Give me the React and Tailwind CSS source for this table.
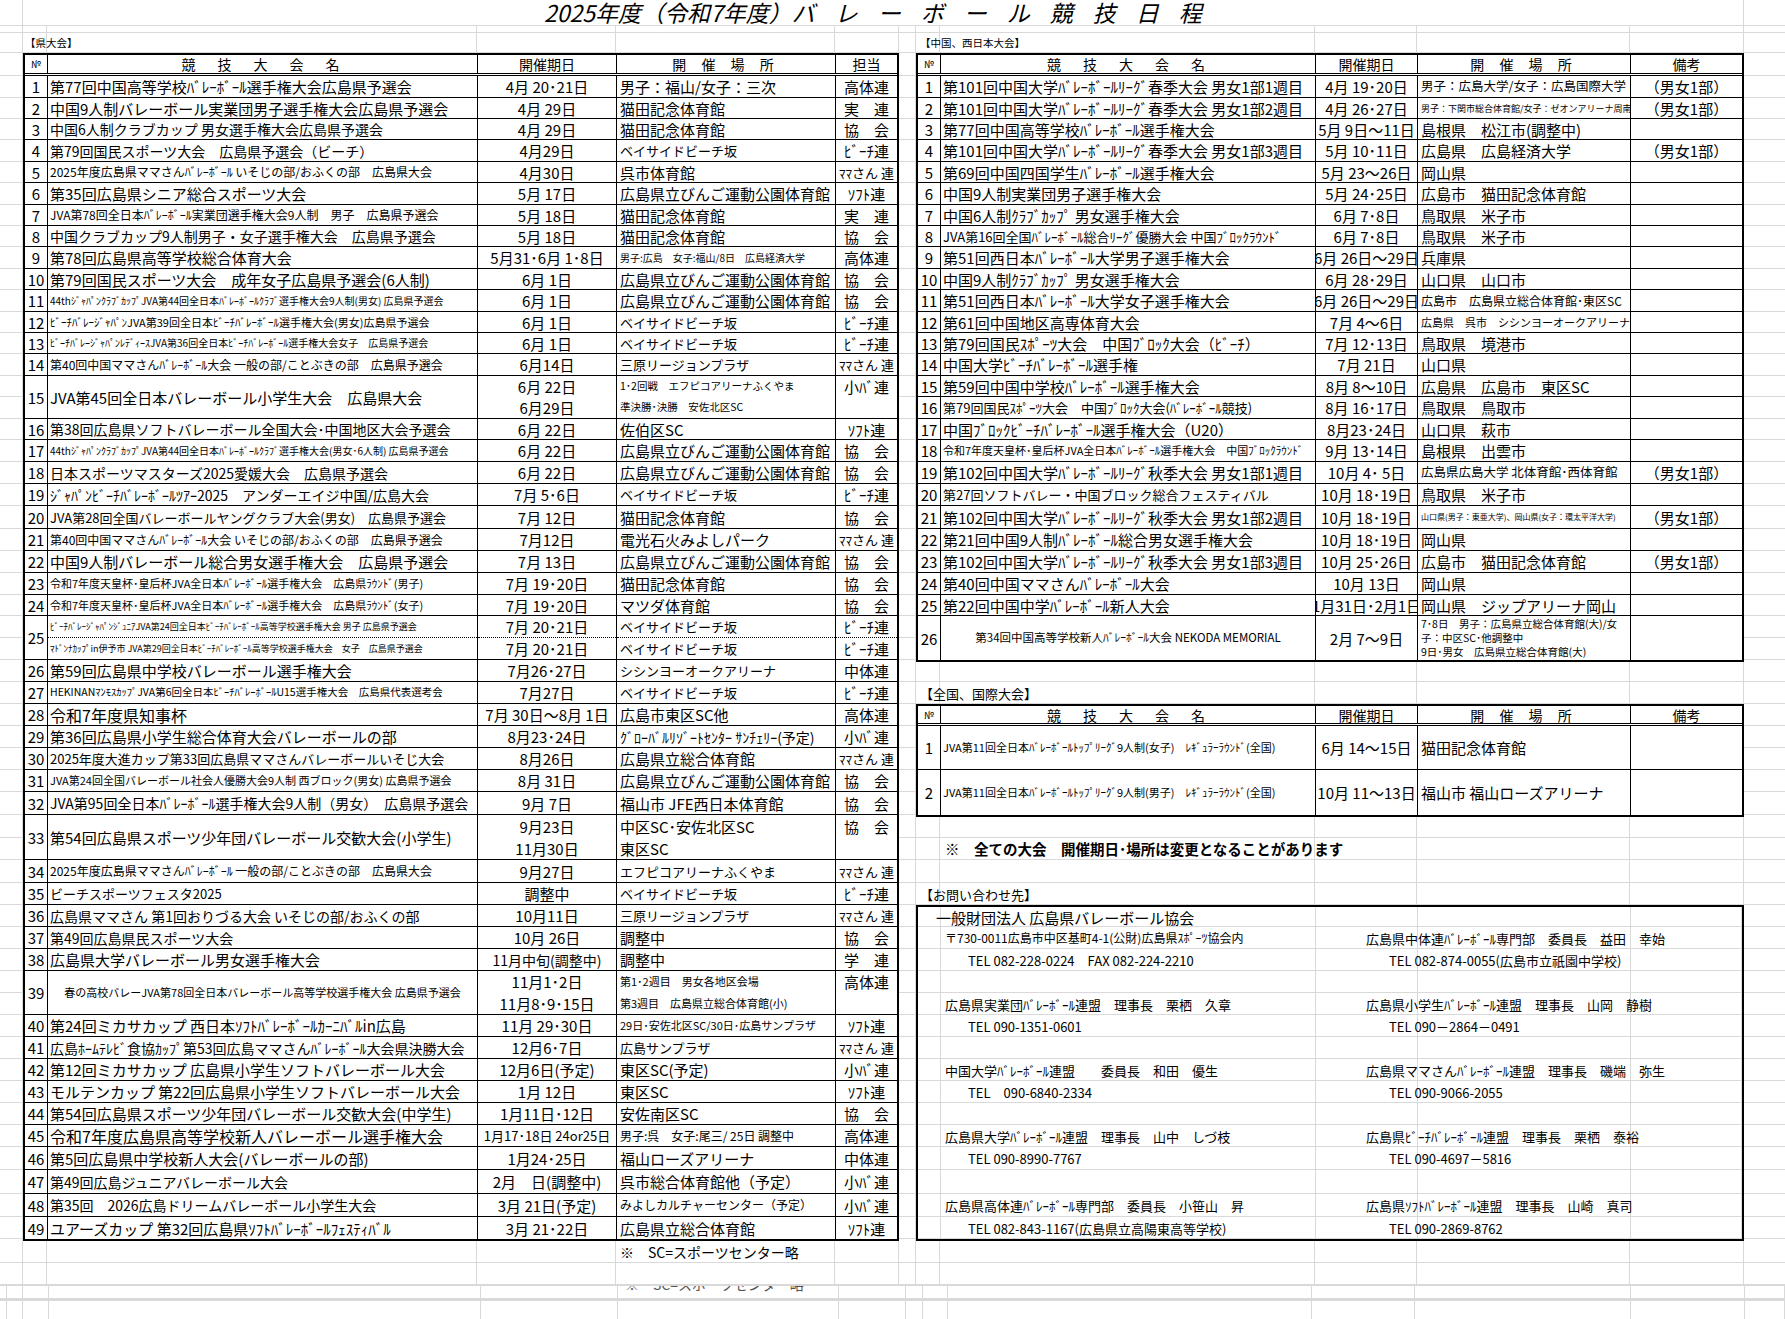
import React from "react";

// row heights (px) -> literal classes
const HC = {
  7: "h-[7px]", 13: "h-[13px]", 19: "h-[19px]", 20: "h-[20px]", 21: "h-[21px]", 22: "h-[22px]",
  23: "h-[23px]", 24: "h-[24px]", 42: "h-[42px]", 43: "h-[43px]", 44: "h-[44px]", 45: "h-[45px]",
  46: "h-[46px]", 47: "h-[47px]",
};

// sheet sub-rows under the table headers
const SUBH = [
  22, 21, 21, 22, 21, 22, 21, 21, 22, 21, 22, 21, 21, 22, 21, 22, 21, 22, 22, 22, 23, 22, 22, 22, 21,
  22, 22, 22, 22, 22, 22, 22, 22, 23, 23, 22, 23, 22, 22, 22, 22, 22, 22, 22, 22, 22, 22, 22, 22, 23, 24, 23, 22,
];

const LW = ["w-[24px]", "w-[430px]", "w-[139px]", "w-[219px]", "w-[64px]"];
const LWI = ["w-[23px]", "w-[430px]", "w-[139px]", "w-[219px]", "w-[61px]"];
const RW = ["w-[24px]", "w-[375px]", "w-[102px]", "w-[213px]", "w-[114px]"];
const RWI = ["w-[23px]", "w-[375px]", "w-[102px]", "w-[213px]", "w-[111px]"];
const P2 = [
  "w-[7px]", "w-[16px]", "w-[26px]", "w-[432px]", "w-[137px]", "w-[221px]", "w-[67px]",
  "w-[17px]", "w-[25px]", "w-[364px]", "w-[103px]", "w-[216px]", "w-[114px]", "w-[40px]",
];

const BEACH = "ベイサイドビーチ坂";
const BINGO = "広島県立びんご運動公園体育館";

const LEFT = [
  { n: 1, name: "第77回中国高等学校ﾊﾞﾚｰﾎﾞｰﾙ選手権大会広島県予選会", d: "4月 20･21日", p: "男子：福山/女子：三次", t: "高体連" },
  { n: 2, name: "中国9人制バレーボール実業団男子選手権大会広島県予選会", d: "4月 29日", p: "猫田記念体育館", t: "実　連" },
  { n: 3, name: "中国6人制クラブカップ 男女選手権大会広島県予選会", nc: "text-[14px]", d: "4月 29日", p: "猫田記念体育館", t: "協　会" },
  { n: 4, name: "第79回国民スポーツ大会　広島県予選会（ビーチ）", nc: "text-[14px]", d: "4月29日", p: BEACH, pc: "text-[13px]", t: "ﾋﾞｰﾁ連" },
  { n: 5, name: "2025年度広島県ママさんﾊﾞﾚｰﾎﾞｰﾙ いそじの部/おふくの部　広島県大会", nc: "text-[12px]", d: "4月30日", p: "呉市体育館", t: "ﾏﾏさん 連", tc: "text-[13px]" },
  { n: 6, name: "第35回広島県シニア総合スポーツ大会", d: "5月 17日", p: BINGO, t: "ｿﾌﾄ連" },
  { n: 7, name: "JVA第78回全日本ﾊﾞﾚｰﾎﾞｰﾙ実業団選手権大会9人制　男子　広島県予選会", nc: "text-[12px]", d: "5月 18日", p: "猫田記念体育館", t: "実　連" },
  { n: 8, name: "中国クラブカップ9人制男子・女子選手権大会　広島県予選会", nc: "text-[14px]", d: "5月 18日", p: "猫田記念体育館", t: "協　会" },
  { n: 9, name: "第78回広島県高等学校総合体育大会", d: "5月31･6月 1･8日", p: "男子:広島　女子:福山/8日　広島経済大学", pc: "text-[10px]", t: "高体連" },
  { n: 10, name: "第79回国民スポーツ大会　成年女子広島県予選会(6人制)", d: "6月 1日", p: BINGO, t: "協　会" },
  { n: 11, name: "44thｼﾞｬﾊﾟﾝｸﾗﾌﾞｶｯﾌﾟJVA第44回全日本ﾊﾞﾚｰﾎﾞｰﾙｸﾗﾌﾞ選手権大会9人制(男女) 広島県予選会", nc: "text-[10px]", d: "6月 1日", p: BINGO, t: "協　会" },
  { n: 12, name: "ﾋﾞｰﾁﾊﾞﾚｰｼﾞｬﾊﾟﾝJVA第39回全日本ﾋﾞｰﾁﾊﾞﾚｰﾎﾞｰﾙ選手権大会(男女)広島県予選会", nc: "text-[11px]", d: "6月 1日", p: BEACH, pc: "text-[13px]", t: "ﾋﾞｰﾁ連" },
  { n: 13, name: "ﾋﾞｰﾁﾊﾞﾚｰｼﾞｬﾊﾟﾝﾚﾃﾞｨｰｽJVA第36回全日本ﾋﾞｰﾁﾊﾞﾚｰﾎﾞｰﾙ選手権大会女子　広島県予選会", nc: "text-[10px]", d: "6月 1日", p: BEACH, pc: "text-[13px]", t: "ﾋﾞｰﾁ連" },
  { n: 14, name: "第40回中国ママさんﾊﾞﾚｰﾎﾞｰﾙ大会 一般の部/ことぶきの部　広島県予選会", nc: "text-[12px]", d: "6月14日", p: "三原リージョンプラザ", pc: "text-[13px]", t: "ﾏﾏさん 連", tc: "text-[13px]" },
  { n: 15, k: 2, name: "JVA第45回全日本バレーボール小学生大会　広島県大会", d: ["6月 22日", "6月29日"], p: ["1･2回戦　エフピコアリーナふくやま", "準決勝･決勝　安佐北区SC"], pc: "text-[10.5px]", t: ["小ﾊﾞ連", ""] },
  { n: 16, name: "第38回広島県ソフトバレーボール全国大会･中国地区大会予選会", nc: "text-[14px]", d: "6月 22日", p: "佐伯区SC", t: "ｿﾌﾄ連" },
  { n: 17, name: "44thｼﾞｬﾊﾟﾝｸﾗﾌﾞｶｯﾌﾟJVA第44回全日本ﾊﾞﾚｰﾎﾞｰﾙｸﾗﾌﾞ選手権大会(男女･6人制) 広島県予選会", nc: "text-[10px]", d: "6月 22日", p: BINGO, t: "協　会" },
  { n: 18, name: "日本スポーツマスターズ2025愛媛大会　広島県予選会", nc: "text-[14px]", d: "6月 22日", p: BINGO, t: "協　会" },
  { n: 19, name: "ｼﾞｬﾊﾟﾝﾋﾞｰﾁﾊﾞﾚｰﾎﾞｰﾙﾂｱｰ2025　アンダーエイジ中国/広島大会", nc: "text-[14px]", d: "7月 5･6日", p: BEACH, pc: "text-[13px]", t: "ﾋﾞｰﾁ連" },
  { n: 20, name: "JVA第28回全国バレーボールヤングクラブ大会(男女)　広島県予選会", nc: "text-[13px]", d: "7月 12日", p: "猫田記念体育館", t: "協　会" },
  { n: 21, name: "第40回中国ママさんﾊﾞﾚｰﾎﾞｰﾙ大会 いそじの部/おふくの部　広島県予選会", nc: "text-[12px]", d: "7月12日", p: "電光石火みよしパーク", t: "ﾏﾏさん 連", tc: "text-[13px]" },
  { n: 22, name: "中国9人制バレーボール総合男女選手権大会　広島県予選会", d: "7月 13日", p: BINGO, t: "協　会" },
  { n: 23, name: "令和7年度天皇杯･皇后杯JVA全日本ﾊﾞﾚｰﾎﾞｰﾙ選手権大会　広島県ﾗｳﾝﾄﾞ(男子)", nc: "text-[11px]", d: "7月 19･20日", p: "猫田記念体育館", t: "協　会" },
  { n: 24, name: "令和7年度天皇杯･皇后杯JVA全日本ﾊﾞﾚｰﾎﾞｰﾙ選手権大会　広島県ﾗｳﾝﾄﾞ(女子)", nc: "text-[11px]", d: "7月 19･20日", p: "マツダ体育館", t: "協　会" },
  {
    n: 25, k: 2, dotted: true, nc: "text-[9px]",
    name: ["ﾋﾞｰﾁﾊﾞﾚｰｼﾞｬﾊﾟﾝｼﾞｭﾆｱJVA第24回全日本ﾋﾞｰﾁﾊﾞﾚｰﾎﾞｰﾙ高等学校選手権大会 男子 広島県予選会", "ﾏﾄﾞﾝﾅｶｯﾌﾟin伊予市 JVA第29回全日本ﾋﾞｰﾁﾊﾞﾚｰﾎﾞｰﾙ高等学校選手権大会　女子　広島県予選会"],
    d: ["7月 20･21日", "7月 20･21日"], p: [BEACH, BEACH], pc: "text-[13px]", t: ["ﾋﾞｰﾁ連", "ﾋﾞｰﾁ連"],
  },
  { n: 26, name: "第59回広島県中学校バレーボール選手権大会", d: "7月26･27日", p: "シシンヨーオークアリーナ", pc: "text-[13px]", t: "中体連" },
  { n: 27, name: "HEKINANﾏﾝﾓｽｶｯﾌﾟJVA第6回全日本ﾋﾞｰﾁﾊﾞﾚｰﾎﾞｰﾙU15選手権大会　広島県代表選考会", nc: "text-[10.5px]", d: "7月27日", p: BEACH, pc: "text-[13px]", t: "ﾋﾞｰﾁ連" },
  { n: 28, name: "令和7年度県知事杯", nc: "text-[16px]", d: "7月 30日～8月 1日", p: "広島市東区SC他", t: "高体連" },
  { n: 29, name: "第36回広島県小学生総合体育大会バレーボールの部", d: "8月23･24日", p: "ｸﾞﾛｰﾊﾞﾙﾘｿﾞｰﾄｾﾝﾀｰ ｻﾝﾁｪﾘｰ(予定)", pc: "text-[14px]", t: "小ﾊﾞ連" },
  { n: 30, name: "2025年度大進カップ第33回広島県ママさんバレーボールいそじ大会", nc: "text-[13px]", d: "8月26日", p: "広島県立総合体育館", t: "ﾏﾏさん 連", tc: "text-[13px]" },
  { n: 31, name: "JVA第24回全国バレーボール社会人優勝大会9人制 西ブロック(男女) 広島県予選会", nc: "text-[11px]", d: "8月 31日", p: BINGO, t: "協　会" },
  { n: 32, name: "JVA第95回全日本ﾊﾞﾚｰﾎﾞｰﾙ選手権大会9人制（男女）　広島県予選会", nc: "text-[14px]", d: "9月 7日", p: "福山市 JFE西日本体育館", t: "協　会" },
  { n: 33, k: 2, name: "第54回広島県スポーツ少年団バレーボール交歓大会(小学生)", d: ["9月23日", "11月30日"], p: ["中区SC･安佐北区SC", "東区SC"], t: ["協　会", ""] },
  { n: 34, name: "2025年度広島県ママさんﾊﾞﾚｰﾎﾞｰﾙ 一般の部/ことぶきの部　広島県大会", nc: "text-[12px]", d: "9月27日", p: "エフピコアリーナふくやま", pc: "text-[13px]", t: "ﾏﾏさん 連", tc: "text-[13px]" },
  { n: 35, name: "ビーチスポーツフェスタ2025", nc: "text-[13px]", d: "調整中", p: BEACH, pc: "text-[13px]", t: "ﾋﾞｰﾁ連" },
  { n: 36, name: "広島県ママさん 第1回おりづる大会 いそじの部/おふくの部", nc: "text-[14px]", d: "10月11日", p: "三原リージョンプラザ", pc: "text-[13px]", t: "ﾏﾏさん 連", tc: "text-[13px]" },
  { n: 37, name: "第49回広島県民スポーツ大会", nc: "text-[14px]", d: "10月 26日", p: "調整中", t: "協　会" },
  { n: 38, name: "広島県大学バレーボール男女選手権大会", d: "11月中旬(調整中)", dc: "text-[14px]", p: "調整中", t: "学　連" },
  {
    n: 39, k: 2, name: "春の高校バレーJVA第78回全日本バレーボール高等学校選手権大会 広島県予選会", nc: "text-[11px]", center: true,
    d: ["11月1･2日", "11月8･9･15日"], p: ["第1･2週目　男女各地区会場", "第3週目　広島県立総合体育館(小)"], pc: "text-[11px]", t: ["高体連", ""],
  },
  { n: 40, name: "第24回ミカサカップ 西日本ｿﾌﾄﾊﾞﾚｰﾎﾞｰﾙｶｰﾆﾊﾞﾙin広島", d: "11月 29･30日", p: "29日･安佐北区SC/30日･広島サンプラザ", pc: "text-[11px]", t: "ｿﾌﾄ連" },
  { n: 41, name: "広島ﾎｰﾑﾃﾚﾋﾞ食協ｶｯﾌﾟ第53回広島ママさんﾊﾞﾚｰﾎﾞｰﾙ大会県決勝大会", nc: "text-[14px]", d: "12月6･7日", p: "広島サンプラザ", pc: "text-[13px]", t: "ﾏﾏさん 連", tc: "text-[13px]" },
  { n: 42, name: "第12回ミカサカップ 広島県小学生ソフトバレーボール大会", d: "12月6日(予定)", p: "東区SC(予定)", t: "小ﾊﾞ連" },
  { n: 43, name: "モルテンカップ 第22回広島県小学生ソフトバレーボール大会", d: "1月 12日", p: "東区SC", t: "ｿﾌﾄ連" },
  { n: 44, name: "第54回広島県スポーツ少年団バレーボール交歓大会(中学生)", d: "1月11日･12日", p: "安佐南区SC", t: "協　会" },
  { n: 45, name: "令和7年度広島県高等学校新人バレーボール選手権大会", nc: "text-[16px]", d: "1月17･18日 24or25日", dc: "text-[13px]", p: "男子:呉　女子:尾三/ 25日 調整中", pc: "text-[12px]", t: "高体連" },
  { n: 46, name: "第5回広島県中学校新人大会(バレーボールの部)", d: "1月24･25日", p: "福山ローズアリーナ", t: "中体連" },
  { n: 47, name: "第49回広島ジュニアバレーボール大会", nc: "text-[14px]", d: "2月　日(調整中)", p: "呉市総合体育館他（予定）", t: "小ﾊﾞ連" },
  { n: 48, name: "第35回　2026広島ドリームバレーボール小学生大会", nc: "text-[14px]", d: "3月 21日(予定)", p: "みよしカルチャーセンター（予定）", pc: "text-[12px]", t: "小ﾊﾞ連" },
  { n: 49, name: "ユアーズカップ 第32回広島県ｿﾌﾄﾊﾞﾚｰﾎﾞｰﾙﾌｪｽﾃｨﾊﾞﾙ", d: "3月 21･22日", p: "広島県立総合体育館", t: "ｿﾌﾄ連" },
];

const M1 = "（男女1部）";
const RIGHT = [
  { n: 1, name: "第101回中国大学ﾊﾞﾚｰﾎﾞｰﾙﾘｰｸﾞ春季大会 男女1部1週目", d: "4月 19･20日", p: "男子：広島大学/女子：広島国際大学", pc: "text-[12.5px]", t: M1 },
  { n: 2, name: "第101回中国大学ﾊﾞﾚｰﾎﾞｰﾙﾘｰｸﾞ春季大会 男女1部2週目", d: "4月 26･27日", p: "男子：下関市総合体育館/女子：ゼオンアリーナ周南", pc: "text-[9px]", t: M1 },
  { n: 3, name: "第77回中国高等学校ﾊﾞﾚｰﾎﾞｰﾙ選手権大会", d: "5月 9日～11日", p: "島根県　松江市(調整中)", t: "" },
  { n: 4, name: "第101回中国大学ﾊﾞﾚｰﾎﾞｰﾙﾘｰｸﾞ春季大会 男女1部3週目", d: "5月 10･11日", p: "広島県　広島経済大学", t: M1 },
  { n: 5, name: "第69回中国四国学生ﾊﾞﾚｰﾎﾞｰﾙ選手権大会", d: "5月 23～26日", p: "岡山県", t: "" },
  { n: 6, name: "中国9人制実業団男子選手権大会", d: "5月 24･25日", p: "広島市　猫田記念体育館", t: "" },
  { n: 7, name: "中国6人制ｸﾗﾌﾞｶｯﾌﾟ 男女選手権大会", d: "6月 7･8日", p: "鳥取県　米子市", t: "" },
  { n: 8, name: "JVA第16回全国ﾊﾞﾚｰﾎﾞｰﾙ総合ﾘｰｸﾞ優勝大会 中国ﾌﾞﾛｯｸﾗｳﾝﾄﾞ", nc: "text-[13px]", d: "6月 7･8日", p: "鳥取県　米子市", t: "" },
  { n: 9, name: "第51回西日本ﾊﾞﾚｰﾎﾞｰﾙ大学男子選手権大会", d: "6月 26日～29日", p: "兵庫県", t: "" },
  { n: 10, name: "中国9人制ｸﾗﾌﾞｶｯﾌﾟ 男女選手権大会", d: "6月 28･29日", p: "山口県　山口市", t: "" },
  { n: 11, name: "第51回西日本ﾊﾞﾚｰﾎﾞｰﾙ大学女子選手権大会", d: "6月 26日～29日", p: "広島市　広島県立総合体育館･東区SC", pc: "text-[12px]", t: "" },
  { n: 12, name: "第61回中国地区高専体育大会", d: "7月 4～6日", p: "広島県　呉市　シシンヨーオークアリーナ", pc: "text-[11px]", t: "" },
  { n: 13, name: "第79回国民ｽﾎﾟｰﾂ大会　中国ﾌﾞﾛｯｸ大会（ﾋﾞｰﾁ）", d: "7月 12･13日", p: "鳥取県　境港市", t: "" },
  { n: 14, name: "中国大学ﾋﾞｰﾁﾊﾞﾚｰﾎﾞｰﾙ選手権", d: "7月 21日", p: "山口県", t: "" },
  { n: 15, name: "第59回中国中学校ﾊﾞﾚｰﾎﾞｰﾙ選手権大会", d: "8月 8～10日", p: "広島県　広島市　東区SC", t: "" },
  { n: 16, name: "第79回国民ｽﾎﾟｰﾂ大会　中国ﾌﾞﾛｯｸ大会(ﾊﾞﾚｰﾎﾞｰﾙ競技)", nc: "text-[13px]", d: "8月 16･17日", p: "鳥取県　鳥取市", t: "" },
  { n: 17, name: "中国ﾌﾞﾛｯｸﾋﾞｰﾁﾊﾞﾚｰﾎﾞｰﾙ選手権大会（U20）", d: "8月23･24日", p: "山口県　萩市", t: "" },
  { n: 18, name: "令和7年度天皇杯･皇后杯JVA全日本ﾊﾞﾚｰﾎﾞｰﾙ選手権大会　中国ﾌﾞﾛｯｸﾗｳﾝﾄﾞ", nc: "text-[11px]", d: "9月 13･14日", p: "島根県　出雲市", t: "" },
  { n: 19, name: "第102回中国大学ﾊﾞﾚｰﾎﾞｰﾙﾘｰｸﾞ秋季大会 男女1部1週目", d: "10月 4･ 5日", p: "広島県広島大学 北体育館･西体育館", pc: "text-[12.5px]", t: M1 },
  { n: 20, name: "第27回ソフトバレー・中国ブロック総合フェスティバル", nc: "text-[13px]", d: "10月 18･19日", p: "鳥取県　米子市", t: "" },
  { n: 21, name: "第102回中国大学ﾊﾞﾚｰﾎﾞｰﾙﾘｰｸﾞ秋季大会 男女1部2週目", d: "10月 18･19日", p: "山口県(男子：東亜大学)、岡山県(女子：環太平洋大学)", pc: "text-[8px]", t: M1 },
  { n: 22, name: "第21回中国9人制ﾊﾞﾚｰﾎﾞｰﾙ総合男女選手権大会", d: "10月 18･19日", p: "岡山県", t: "" },
  { n: 23, name: "第102回中国大学ﾊﾞﾚｰﾎﾞｰﾙﾘｰｸﾞ秋季大会 男女1部3週目", d: "10月 25･26日", p: "広島市　猫田記念体育館", t: M1 },
  { n: 24, name: "第40回中国ママさんﾊﾞﾚｰﾎﾞｰﾙ大会", d: "10月 13日", p: "岡山県", t: "" },
  { n: 25, name: "第22回中国中学ﾊﾞﾚｰﾎﾞｰﾙ新人大会", d: "1月31日･2月1日", p: "岡山県　ジップアリーナ岡山", t: "" },
  {
    n: 26, k: 2, name: "第34回中国高等学校新人ﾊﾞﾚｰﾎﾞｰﾙ大会 NEKODA MEMORIAL", nc: "text-[11.5px]", center: true, d: "2月 7～9日",
    p: (
      <div className="flex flex-col leading-[14px]">
        <span>7･8日　男子：広島県立総合体育館(大)/女</span>
        <span>子：中区SC･他調整中</span>
        <span>9日･男女　広島県立総合体育館(大)</span>
      </div>
    ),
    pc: "text-[10.5px]", t: "",
  },
];

const ZENKOKU = [
  { n: 1, k: 2, name: "JVA第11回全日本ﾊﾞﾚｰﾎﾞｰﾙﾄｯﾌﾟﾘｰｸﾞ9人制(女子)　ﾚｷﾞｭﾗｰﾗｳﾝﾄﾞ(全国)", nc: "text-[11px]", d: "6月 14～15日", p: "猫田記念体育館", t: "" },
  { n: 2, k: 2, name: "JVA第11回全日本ﾊﾞﾚｰﾎﾞｰﾙﾄｯﾌﾟﾘｰｸﾞ9人制(男子)　ﾚｷﾞｭﾗｰﾗｳﾝﾄﾞ(全国)", nc: "text-[11px]", d: "10月 11～13日", p: "福山市 福山ローズアリーナ", t: "" },
];

const CONTACT = [
  { l: "一般財団法人 広島県バレーボール協会", lp: "pl-[18px] text-[15px]" },
  { l: "〒730-0011広島市中区基町4-1(公財)広島県ｽﾎﾟｰﾂ協会内", lp: "pl-[27px] text-[12px]", r: "広島県中体連ﾊﾞﾚｰﾎﾞｰﾙ専門部　委員長　益田　幸始" },
  { l: "TEL 082-228-0224　FAX 082-224-2210", lp: "pl-[50px] text-[13px]", r: "TEL 082-874-0055(広島市立祇園中学校)", tel: true },
  {},
  { l: "広島県実業団ﾊﾞﾚｰﾎﾞｰﾙ連盟　理事長　栗栖　久章", lp: "pl-[27px] text-[13px]", r: "広島県小学生ﾊﾞﾚｰﾎﾞｰﾙ連盟　理事長　山岡　静樹" },
  { l: "TEL 090-1351-0601", lp: "pl-[50px] text-[13px]", r: "TEL 090－2864－0491", tel: true },
  {},
  { l: "中国大学ﾊﾞﾚｰﾎﾞｰﾙ連盟　　委員長　和田　優生", lp: "pl-[27px] text-[13px]", r: "広島県ママさんﾊﾞﾚｰﾎﾞｰﾙ連盟　理事長　磯端　弥生" },
  { l: "TEL　090-6840-2334", lp: "pl-[50px] text-[13px]", r: "TEL 090-9066-2055", tel: true },
  {},
  { l: "広島県大学ﾊﾞﾚｰﾎﾞｰﾙ連盟　理事長　山中　しづ枝", lp: "pl-[27px] text-[13px]", r: "広島県ﾋﾞｰﾁﾊﾞﾚｰﾎﾞｰﾙ連盟　理事長　栗栖　泰裕" },
  { l: "TEL 090-8990-7767", lp: "pl-[50px] text-[13px]", r: "TEL 090-4697－5816", tel: true },
  {},
  { l: "広島県高体連ﾊﾞﾚｰﾎﾞｰﾙ専門部　委員長　小笹山　昇", lp: "pl-[27px] text-[13px]", r: "広島県ｿﾌﾄﾊﾞﾚｰﾎﾞｰﾙ連盟　理事長　山崎　真司" },
  { l: "TEL 082-843-1167(広島県立高陽東高等学校)", lp: "pl-[50px] text-[13px]", r: "TEL 090-2869-8762", tel: true },
];

// spreadsheet gridlines behind, content stacked on top in the same grid cell
function GridBg({ h, widths, className = "", children }) {
  return (
    <div className={`grid grid-cols-1 shrink-0 ${h}`}>
      <div className="col-start-1 row-start-1 flex">
        {widths.map((w, i) => (
          <div key={i} className={`${w} shrink-0 border-r border-b border-[#d9d9d9]`} />
        ))}
      </div>
      <div className={`col-start-1 row-start-1 flex items-center whitespace-nowrap leading-none ${className}`}>
        {children}
      </div>
    </div>
  );
}

function Cell({ w, vals, cls, align, dotted, last }) {
  const arr = Array.isArray(vals) ? vals : [vals];
  return (
    <div className={`${w} shrink-0 flex flex-col ${last ? "" : "border-r border-black"}`}>
      {arr.map((v, i) => (
        <div
          key={i}
          className={`flex-1 min-h-0 flex items-center overflow-hidden whitespace-nowrap leading-none ${align} ${cls} ${
            dotted && i < arr.length - 1 ? "border-b border-dotted border-black" : ""
          }`}
        >
          {v}
        </div>
      ))}
    </div>
  );
}

function Header({ widths, head, h }) {
  return (
    <div className={`flex ${h} border-b-[3px] border-double border-black text-[14px] leading-none`}>
      <div className={`${widths[0]} shrink-0 border-r border-black flex items-center justify-center text-[10px]`}>№</div>
      <div className={`${widths[1]} shrink-0 border-r border-black flex items-center justify-center tracking-[4px]`}>
        競　技　大　会　名
      </div>
      <div className={`${widths[2]} shrink-0 border-r border-black flex items-center justify-center`}>開催期日</div>
      <div className={`${widths[3]} shrink-0 border-r border-black flex items-center justify-center tracking-[6px]`}>
        開 催 場 所
      </div>
      <div className={`${widths[4]} shrink-0 flex items-center justify-center`}>{head}</div>
    </div>
  );
}

function Table({ widths, head, rows, start, headH }) {
  let k = start;
  return (
    <div className="border-2 border-black shrink-0">
      <Header widths={widths} head={head} h={headH} />
      {rows.map((r, i) => {
        const n = r.k || 1;
        const h = SUBH.slice(k, k + n).reduce((a, b) => a + b, 0);
        k += n;
        const last = i === rows.length - 1;
        return (
          <div key={i} className={`flex ${HC[h]} ${last ? "" : "border-b border-black"}`}>
            <Cell w={widths[0]} vals={r.n} cls="text-[15px]" align="justify-center" />
            <Cell
              w={widths[1]}
              vals={r.name}
              cls={r.nc || "text-[15px]"}
              align={r.center ? "justify-center" : "pl-[2px]"}
              dotted={r.dotted}
            />
            <Cell w={widths[2]} vals={r.d} cls={r.dc || "text-[15px]"} align="justify-center" dotted={r.dotted} />
            <Cell w={widths[3]} vals={r.p} cls={r.pc || "text-[15px]"} align="pl-[3px]" dotted={r.dotted} />
            <Cell w={widths[4]} vals={r.t} cls={r.tc || "text-[15px]"} align="justify-center" dotted={r.dotted} last />
          </div>
        );
      })}
    </div>
  );
}

function MarginCol({ w, hs, right = true }) {
  return (
    <div className={`${w} shrink-0 flex flex-col`}>
      {hs.map((h, i) => (
        <div key={i} className={`${HC[h]} shrink-0 border-b ${right ? "border-r" : ""} border-[#d9d9d9]`} />
      ))}
    </div>
  );
}

export default function App() {
  const marginHs = [7, 20, 23, ...SUBH, 24, 22];

  return (
    <div className="w-[1785px] h-[1319px] overflow-hidden bg-white text-black font-['Noto_Sans_CJK_JP','Noto_Sans_CJK_SC',sans-serif]">
      {/* title */}
      <div className="flex h-[26px]">
        <div className="w-[23px] shrink-0 border-r border-b border-[#d9d9d9]" />
        <div className="w-[1721px] shrink-0 border-r border-b border-[#d9d9d9] flex items-center pl-[521px] italic text-[23px] leading-none whitespace-nowrap">
          <span>2025年度（令和7年度）</span>
          <span className="tracking-[20px]">バレーボール競技日程</span>
        </div>
        <div className="w-[41px] shrink-0 border-b border-[#d9d9d9]" />
      </div>

      <div className="flex">
        <MarginCol w="w-[23px]" hs={marginHs} />

        {/* 県大会 */}
        <div className="w-[876px] shrink-0 flex flex-col">
          <GridBg h={HC[7]} widths={LW} />
          <GridBg h={HC[20]} widths={LW} className="pl-[2px] text-[10.5px]">【県大会】</GridBg>
          <Table widths={LWI} head="担当" rows={LEFT} start={0} headH="h-[21px]" />
          <GridBg h={HC[22]} widths={LW} className="pl-[597px] text-[14px]">※　SC=スポーツセンター略</GridBg>
          <GridBg h={HC[22]} widths={LW} />
        </div>

        <MarginCol w="w-[17px]" hs={marginHs} />

        {/* 中国・西日本 / 全国 / お問い合わせ */}
        <div className="w-[828px] shrink-0 flex flex-col">
          <GridBg h={HC[7]} widths={RW} />
          <GridBg h={HC[20]} widths={RW} className="pl-[4px] text-[10.5px]">【中国、西日本大会】</GridBg>
          <Table widths={RWI} head="備考" rows={RIGHT} start={0} headH="h-[21px]" />
          <GridBg h={HC[20]} widths={RW} />
          <GridBg h={HC[22]} widths={RW} className="pl-[4px] text-[13px]">【全国、国際大会】</GridBg>
          <Table widths={RWI} head="備考" rows={ZENKOKU} start={30} headH="h-[20px]" />
          <GridBg h={HC[21]} widths={RW} />
          <GridBg h={HC[22]} widths={RW} className="pl-[29px] text-[14.5px] font-bold">
            ※　全ての大会　開催期日･場所は変更となることがあります
          </GridBg>
          <GridBg h={HC[23]} widths={RW} />
          <GridBg h={HC[22]} widths={RW} className="pl-[4px] text-[13px]">【お問い合わせ先】</GridBg>
          <div className="border-2 border-black shrink-0">
            {CONTACT.map((c, i) => {
              const h = i === 0 ? SUBH[38] - 2 : SUBH[38 + i];
              return (
                <GridBg key={i} h={HC[h]} widths={RWI}>
                  <span className={`w-[448px] shrink-0 ${c.lp || ""}`}>{c.l}</span>
                  <span className={`text-[13px] ${c.tel ? "pl-[23px]" : ""}`}>{c.r}</span>
                </GridBg>
              );
            })}
          </div>
          <GridBg h={HC[22]} widths={RW} />
          <GridBg h={HC[22]} widths={RW} />
        </div>

        <MarginCol w="w-[41px]" hs={marginHs} right={false} />
      </div>

      {/* next printed page peeking in */}
      <div className="border-t border-[#d9d9d9]">
        <GridBg h={HC[13]} widths={P2} className="items-start overflow-hidden">
          <span className="pl-[625px] -mt-[9px] text-[14px] text-[#555]">※　SC=スポーツセンター略</span>
        </GridBg>
        <div className="border-t-2 border-[#d9d9d9]">
          <GridBg h={HC[19]} widths={P2} />
        </div>
      </div>
    </div>
  );
}
